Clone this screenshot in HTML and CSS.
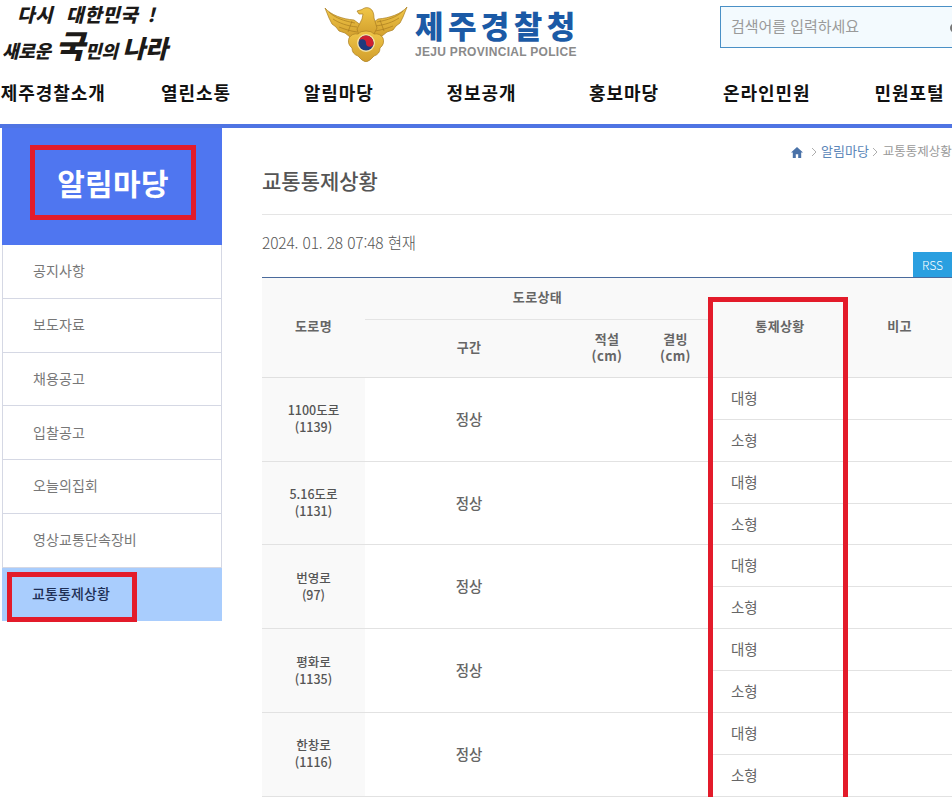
FILE: index.html
```html
<!DOCTYPE html>
<html lang="ko">
<head>
<meta charset="utf-8">
<title>교통통제상황</title>
<link rel="stylesheet" href="styles.css">
</head>
<body>
<div class="page">
  <header class="site-header">
    <div class="top">
      <div class="slogan">
        <span class="slogan-a">다시 <span class="gap">대한민국</span> !</span>
        <span class="slogan-b">새로운 <span class="big">국</span>민의 <span class="mid">나라</span></span>
      </div>
      <div class="brand">
        <svg class="emblem" viewBox="0 0 84 56" aria-hidden="true">
          <defs>
            <linearGradient id="gold" x1="0" y1="0" x2="0" y2="1">
              <stop offset="0" stop-color="#f0c648"/>
              <stop offset="1" stop-color="#d19e2c"/>
            </linearGradient>
            <g id="wing">
              <path d="M1 2 C7 9 18 13 30 14 L38 20 L35 33 L26 31 L21 27 L15 25 L12 21 L8 18 L5 12Z" fill="url(#gold)" stroke="#a97c1f" stroke-width=".7"/>
              <path d="M5 6 C11 12 20 15 31 17 M9 13 C15 17 23 20 33 21 M15 21 C20 23 26 25 33 26 M28 15 L24 26" fill="none" stroke="#a97c1f" stroke-width=".7"/>
            </g>
          </defs>
          <use href="#wing"/>
          <use href="#wing" transform="matrix(-1 0 0 1 84 -1)"/>
          <path d="M33 5 L38 3.5 C40 1.5 44 1 46 2.5 C49 4 50 8 50 12 L53 22 L49 30 L35 30 L33 23 L38 13 L39 8 L35 8Z" fill="url(#gold)" stroke="#a97c1f" stroke-width=".7"/>
          <path d="M42 25 Q48 25 50 28 Q56 27 59 32 Q61 38 56 42 Q56 48 50 50 Q46 55 42 56 Q38 55 34 50 Q28 48 28 42 Q23 38 25 32 Q28 27 34 28 Q36 25 42 25Z" fill="url(#gold)" stroke="#a97c1f" stroke-width=".7"/>
          <circle cx="42" cy="37" r="9" fill="#f4e3a6"/>
          <circle cx="42" cy="37" r="7.6" fill="#1e3a7d"/>
          <path d="M34.4 37 A7.6 7.6 0 0 1 49.6 37 A3.8 3.8 0 0 1 42 37 A3.8 3.8 0 0 0 34.4 37Z" fill="#cf2030"/>
        </svg>
        <div class="brand-text">
          <span class="brand-ko">제주경찰청</span>
          <span class="brand-en">JEJU PROVINCIAL POLICE</span>
        </div>
      </div>
      <div class="search">
        <span class="search-hint">검색어를 입력하세요</span>
        <span class="search-glass"></span>
      </div>
    </div>
    <nav class="gnb">
      <a>제주경찰소개</a><a>열린소통</a><a>알림마당</a><a>정보공개</a><a>홍보마당</a><a>온라인민원</a><a>민원포털</a>
    </nav>
  </header>
  <div class="body-row">
    <aside class="side">
      <div class="side-head"><h2>알림마당</h2><span class="mark mark-head"></span></div>
      <ul class="side-menu">
        <li>공지사항</li>
        <li>보도자료</li>
        <li>채용공고</li>
        <li>입찰공고</li>
        <li>오늘의집회</li>
        <li>영상교통단속장비</li>
        <li class="active">교통통제상황<span class="mark mark-item"></span></li>
      </ul>
    </aside>
    <main class="content">
      <div class="crumb">
        <svg class="home" viewBox="0 0 12 11" aria-hidden="true"><path d="M6 0 L12 5.6 H10.2 V11 H7.2 V7.2 H4.8 V11 H1.8 V5.6 H0Z" fill="#4a72a8"/></svg>
        <svg class="chev" viewBox="0 0 6 10" aria-hidden="true"><path d="M1 1 L5 5 L1 9" fill="none" stroke="#999" stroke-width=".8"/></svg>
        <span class="crumb-link">알림마당</span>
        <svg class="chev chev-b" viewBox="0 0 6 10" aria-hidden="true"><path d="M1 1 L5 5 L1 9" fill="none" stroke="#999" stroke-width=".8"/></svg>
        <span class="crumb-now">교통통제상황</span>
      </div>
      <h1 class="title">교통통제상황</h1>
      <div class="meta">
        <span class="stamp">2024. 01. 28 07:48 현재</span>
        <a class="rss">RSS</a>
      </div>
      <div class="table-wrap">
        <table class="traffic">
          <colgroup>
            <col class="c-road"><col class="c-sec"><col class="c-snow"><col class="c-ice"><col class="c-ctl"><col class="c-note">
          </colgroup>
          <thead>
            <tr class="h1">
              <th rowspan="2">도로명</th>
              <th colspan="3">도로상태</th>
              <th rowspan="2">통제상황</th>
              <th rowspan="2" class="note">비고</th>
            </tr>
            <tr class="h2">
              <th>구간</th>
              <th>적설<br>(cm)</th>
              <th>결빙<br>(cm)</th>
            </tr>
          </thead>
          <tbody>
            <tr><th class="road" rowspan="2">1100도로<br>(1139)</th><td class="state" rowspan="2">정상</td><td rowspan="2"></td><td rowspan="2"></td><td class="ctl">대형</td><td></td></tr>
            <tr><td class="ctl">소형</td><td></td></tr>
            <tr><th class="road" rowspan="2">5.16도로<br>(1131)</th><td class="state" rowspan="2">정상</td><td rowspan="2"></td><td rowspan="2"></td><td class="ctl">대형</td><td></td></tr>
            <tr><td class="ctl">소형</td><td></td></tr>
            <tr><th class="road" rowspan="2">번영로<br>(97)</th><td class="state" rowspan="2">정상</td><td rowspan="2"></td><td rowspan="2"></td><td class="ctl">대형</td><td></td></tr>
            <tr><td class="ctl">소형</td><td></td></tr>
            <tr><th class="road" rowspan="2">평화로<br>(1135)</th><td class="state" rowspan="2">정상</td><td rowspan="2"></td><td rowspan="2"></td><td class="ctl">대형</td><td></td></tr>
            <tr><td class="ctl">소형</td><td></td></tr>
            <tr><th class="road" rowspan="2">한창로<br>(1116)</th><td class="state" rowspan="2">정상</td><td rowspan="2"></td><td rowspan="2"></td><td class="ctl">대형</td><td></td></tr>
            <tr><td class="ctl">소형</td><td></td></tr>
          </tbody>
        </table>
        <span class="mark mark-col"></span>
      </div>
    </main>
  </div>
</div>
</body>
</html>
```
FILE: styles.css
```css
html, body { margin: 0; padding: 0; height: 100%; overflow: hidden; background: #fff; }
body { font-family: "Noto Sans CJK KR", "Noto Sans", sans-serif; color: #555; }
.page { width: 952px; height: 797px; overflow: hidden; }
h1, h2, ul { margin: 0; padding: 0; }
li { list-style: none; }

.site-header { height: 124px; border-bottom: 4px solid #4f74e3; }
.top { height: 70px; display: flex; position: relative; }
.slogan { width: 325px; flex: none; display: flex; flex-direction: column; color: #1c1a18; font-weight: 900; font-style: italic; }
.slogan-a { font-size: 19px; line-height: 28px; margin: 0 0 0 17px; white-space: nowrap; letter-spacing: .6px; }
.gap { margin: 0 3px 0 7px; }
.slogan-b { font-size: 18px; line-height: 34px; margin: -1px 0 0 2px; letter-spacing: -.3px; white-space: nowrap; }
.big { font-size: 32px; letter-spacing: 0; }
.mid { font-size: 25px; letter-spacing: -.5px; }
.brand { width: 395px; flex: none; display: flex; align-items: flex-start; }
.emblem { width: 84px; height: 56px; margin-top: 6px; margin-left: -1px; flex: none; }
.brand-text { margin-left: 7px; display: flex; flex-direction: column; }
.brand-ko { font-size: 31px; line-height: 30px; margin-top: 10px; font-weight: 900; color: #1b5aa6; letter-spacing: 4.4px; white-space: nowrap; }
.brand-en { font-family: "Liberation Sans", sans-serif; font-weight: 700; font-size: 12px; line-height: 14px; margin-top: 5px; color: #8a8a8a; letter-spacing: .3px; white-space: nowrap; }
.search { width: 300px; height: 40px; margin-top: 6px; flex: none; box-sizing: content-box; border: 1px solid #4a90c6; background: #f3fafe; display: flex; align-items: center; padding-left: 10px; position: relative; }
.search-hint { font-size: 15px; line-height: 20px; margin-top: -2px; color: #9a9a9a; letter-spacing: -.05px; }
.search-glass { position: absolute; left: 229px; top: 16px; width: 6px; height: 6px; border: 2px solid #777; border-radius: 50%; }

.gnb { display: grid; grid-template-columns: repeat(7, 142.7px); margin-left: -18px; height: 44px; align-items: center; }
.gnb a { text-align: center; font-size: 18px; font-weight: 700; color: #111; letter-spacing: .95px; white-space: nowrap; line-height: 44px; }

.body-row { display: flex; align-items: flex-start; }
.side { width: 220px; margin-left: 2px; flex: none; }
.side-head { height: 108px; padding-bottom: 9px; background: #4f76f0; display: flex; align-items: center; justify-content: center; position: relative; }
.side-head h2 { font-size: 30px; font-weight: 700; color: #fff; line-height: 1; letter-spacing: .3px; padding-left: 2px; }
.side-menu li { height: 53.75px; box-sizing: border-box; border: 1px solid #d5d8e4; border-top: 0; display: flex; align-items: center; padding: 0 0 2px 30px; font-size: 14px; letter-spacing: .1px; color: #777; position: relative; }
.side-menu li.active { background: #a9cdfd; border: 0; padding: 0 0 2px 30px; color: #1e2f55; font-weight: 500; }

.mark { position: absolute; box-sizing: border-box; border: 5px solid #e31b2a; pointer-events: none; }
.mark-head { left: 28px; top: 17px; width: 166px; height: 75px; }
.mark-item { left: 5px; top: 4px; width: 130px; height: 50px; }
.mark-col { left: 446px; top: 20px; width: 140px; height: 540px; }

.content { width: 690px; margin-left: 40px; flex: none; }
.crumb { height: 48px; display: flex; align-items: center; padding-left: 529px; white-space: nowrap; }
.home { width: 12px; height: 11px; flex: none; }
.chev { width: 6px; height: 10px; margin: 0 4px 0 8px; flex: none; }
.chev-b { margin: 0 5px 0 3px; }
.crumb-link { color: #5b86b8; font-size: 13px; line-height: 18px; margin-top: -2px; }
.crumb-now { color: #999; font-size: 12.5px; line-height: 18px; margin-top: -2px; }
.title { font-size: 21px; line-height: 30px; font-weight: 500; color: #555; padding: 0 0 19px; border-bottom: 1px solid #e5e5e5; margin-top: -11px; }
.meta { height: 62px; position: relative; }
.stamp { position: absolute; left: 0; top: 15px; font-size: 15.5px; font-weight: 300; color: #555; line-height: 24px; white-space: nowrap; letter-spacing: -.15px; }
.rss { position: absolute; right: 0; bottom: 0; width: 39px; height: 25px; background: #2a9fe0; color: #fff; font-size: 12px; display: flex; align-items: center; justify-content: center; font-weight: 300; }

.table-wrap { position: relative; }
.traffic { width: 690px; table-layout: fixed; border-collapse: collapse; border-top: 1px solid #4a6a9c; font-size: 13px; color: #666; }
.c-road { width: 103px; } .c-sec { width: 208px; } .c-snow { width: 68px; } .c-ice { width: 69px; } .c-ctl { width: 140px; } .c-note { width: 102px; }
.traffic th, .traffic td { padding: 0; text-align: center; vertical-align: middle; line-height: 17px; }
.traffic thead th { background: #f9f9f9; font-weight: 700; letter-spacing: .4px; padding-bottom: 4px; }
.traffic thead th.note { padding-right: 3px; }
.traffic thead tr.h1 th { height: 37px; }
.traffic thead tr.h2 th { height: 53px; border-top: 1px solid #e4e4e4; }
.traffic thead tr.h1 th[rowspan] { border-top: 0; }
.traffic thead { border-bottom: 1px solid #e0e0e0; }
.traffic tbody td { height: 38.86px; padding-bottom: 2px; }
.traffic tbody td.ctl, .traffic tbody td:last-child { border-bottom: 1px solid #e2e2e2; }
.traffic tbody td[rowspan], .traffic tbody th[rowspan] { border-bottom: 1px solid #e2e2e2; }
.traffic .road { background: #f9f9f9; font-size: 12.5px; font-weight: 500; color: #555; padding-bottom: 2px; }
.state { font-size: 14.5px; font-weight: 500; }
.traffic .ctl { text-align: left; padding-left: 21px; font-size: 14.5px; }
```
